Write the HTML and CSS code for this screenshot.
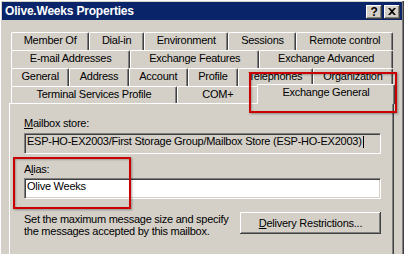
FILE: index.html
```html
<!DOCTYPE html>
<html lang="en">
<head>
    <meta charset="UTF-8">
    <meta name="viewport" content="width=device-width, initial-scale=1.0">
    <title>Olive.Weeks Properties</title>
    <link rel="stylesheet" href="styles.css">
</head>
<body>
    <div class="window">
        <div class="titlebar">
            <span class="title">Olive.Weeks Properties</span>
            <div class="caption-buttons">
                <span class="cap-btn help">?</span>
                <span class="cap-btn close">
                    <svg width="8" height="7" viewBox="0 0 8 7"><path d="M0 0h2l2 2 2-2h2L5 3.5 8 7H6L4 5 2 7H0l3-3.5z" fill="#000"/></svg>
                </span>
            </div>
        </div>

        <div class="tabctl">
            <div class="tab-row">
                <div class="tab">Member Of</div>
                <div class="tab">Dial-in</div>
                <div class="tab">Environment</div>
                <div class="tab">Sessions</div>
                <div class="tab">Remote control</div>
            </div>
            <div class="tab-row">
                <div class="tab">E-mail Addresses</div>
                <div class="tab">Exchange Features</div>
                <div class="tab">Exchange Advanced</div>
            </div>
            <div class="tab-row">
                <div class="tab">General</div>
                <div class="tab">Address</div>
                <div class="tab">Account</div>
                <div class="tab">Profile</div>
                <div class="tab">Telephones</div>
                <div class="tab">Organization</div>
            </div>
            <div class="tab-row front">
                <div class="tab">Terminal Services Profile</div>
                <div class="tab">COM+</div>
                <div class="tab selected">Exchange General</div>
            </div>

            <div class="panel">
                <label class="field-label"><u>M</u>ailbox store:</label>
                <div class="textbox readonly">ESP-HO-EX2003/First Storage Group/Mailbox Store (ESP-HO-EX2003)<span class="caret"></span></div>

                <label class="field-label alias-label">A<u>l</u>ias:</label>
                <div class="textbox">Olive Weeks</div>

                <div class="limits">
                    <p>Set the maximum message size and specify<br>the messages accepted by this mailbox.</p>
                    <button class="btn"><u>D</u>elivery Restrictions...</button>
                </div>
            </div>
        </div>

        <!-- red highlight boxes drawn over the dialog -->
        <div class="callout callout-tab"></div>
        <div class="callout callout-alias"></div>
    </div>
</body>
</html>
```

FILE: styles.css
```css
body {
    margin: 0;
    background-color: #d4d0c8;
    font-family: "Liberation Sans", Arial, sans-serif;
    font-size: 11px;
    letter-spacing: -0.25px;
    color: #000;
}

.window {
    position: relative;
    width: 404px;
    height: 254px;
    box-sizing: border-box;
    padding: 2px 2px 0 2px;
    overflow: hidden;
    background-color: #d4d0c8;
    box-shadow: inset 1px 1px #fff, inset -1px 0 #404040, inset -2px 0 #808080;
}

.titlebar {
    display: flex;
    justify-content: space-between;
    align-items: center;
    height: 18px;
    padding: 0 2px 0 3px;
    background-color: #0a246a;
    color: #fff;
}

.title {
    font-size: 12px;
    font-weight: bold;
    letter-spacing: -0.2px;
}

.caption-buttons {
    display: flex;
    gap: 2px;
    margin-top: 2px;
}

.cap-btn {
    display: flex;
    justify-content: center;
    align-items: center;
    width: 16px;
    height: 14px;
    box-sizing: border-box;
    background-color: #d4d0c8;
    box-shadow: inset -1px -1px #404040, inset 1px 1px #fff, inset -2px -2px #808080, inset 2px 2px #d4d0c8;
    color: #000;
}

.help {
    font-size: 12px;
    font-weight: bold;
    line-height: 12px;
    padding-bottom: 1px;
}

.close svg {
    display: block;
    margin-top: -1px;
}

/* tab control */
.tabctl {
    width: 385px;
    margin: 12px 0 0 7px;
}

.tab-row {
    display: flex;
    height: 18px;
    margin: 0 1px 0 2px;
}

.tab {
    flex: 1 1 auto;
    box-sizing: border-box;
    height: 18px;
    padding: 0 4px;
    line-height: 14px;
    text-align: center;
    white-space: nowrap;
    background-color: #d4d0c8;
    border-top: 1px solid #fff;
    border-left: 1px solid #fff;
    border-right: 1px solid #404040;
    border-radius: 2px 2px 0 0;
    box-shadow: inset -1px 0 #808080;
}

.front {
    height: 17px;
}

.front .tab {
    height: 17px;
}

.front .selected {
    position: relative;
    z-index: 1;
    height: 20px;
    margin: -2px -2px -1px -2px;
}

.panel {
    height: 160px;
    box-sizing: border-box;
    padding: 13px 0 0 14px;
    background-color: #d4d0c8;
    border-top: 1px solid #fff;
    border-left: 1px solid #fff;
    border-right: 1px solid #404040;
    box-shadow: inset -1px 0 #808080;
}

.field-label {
    display: block;
    line-height: 13px;
}

.alias-label {
    margin-top: 9px;
}

.textbox {
    width: 357px;
    height: 21px;
    box-sizing: border-box;
    margin-top: 3px;
    padding: 1px 2px;
    line-height: 13px;
    white-space: nowrap;
    background-color: #fff;
    border: 1px solid;
    border-color: #808080 #fff #fff #808080;
    box-shadow: inset 1px 1px #404040, inset -1px -1px #d4d0c8;
}

.alias-label + .textbox {
    margin-top: 2px;
}

.readonly {
    background-color: #d4d0c8;
}

.caret {
    display: inline-block;
    width: 1px;
    height: 12px;
    margin-left: 1px;
    vertical-align: -3px;
    background-color: #000;
}

.limits {
    display: flex;
    align-items: flex-start;
    width: 357px;
    margin-top: 13px;
}

.limits p {
    margin: 0;
    padding-top: 1px;
    line-height: 12px;
}

.btn {
    width: 141px;
    height: 22px;
    margin-left: auto;
    padding: 0;
    border: none;
    font-family: inherit;
    font-size: 11px;
    letter-spacing: -0.25px;
    color: #000;
    background-color: #d4d0c8;
    box-shadow: inset -1px -1px #404040, inset 1px 1px #fff, inset -2px -2px #808080, inset 2px 2px #d4d0c8;
}

/* annotation boxes */
.callout {
    position: absolute;
    box-sizing: border-box;
    border: 2px solid #cc0000;
    box-shadow: 1px 1px 2px rgba(0, 0, 0, 0.35), inset 1px 1px 2px rgba(0, 0, 0, 0.25);
}

.callout-tab {
    left: 249px;
    top: 72px;
    width: 148px;
    height: 41px;
}

.callout-alias {
    left: 13px;
    top: 157px;
    width: 118px;
    height: 52px;
}
```
